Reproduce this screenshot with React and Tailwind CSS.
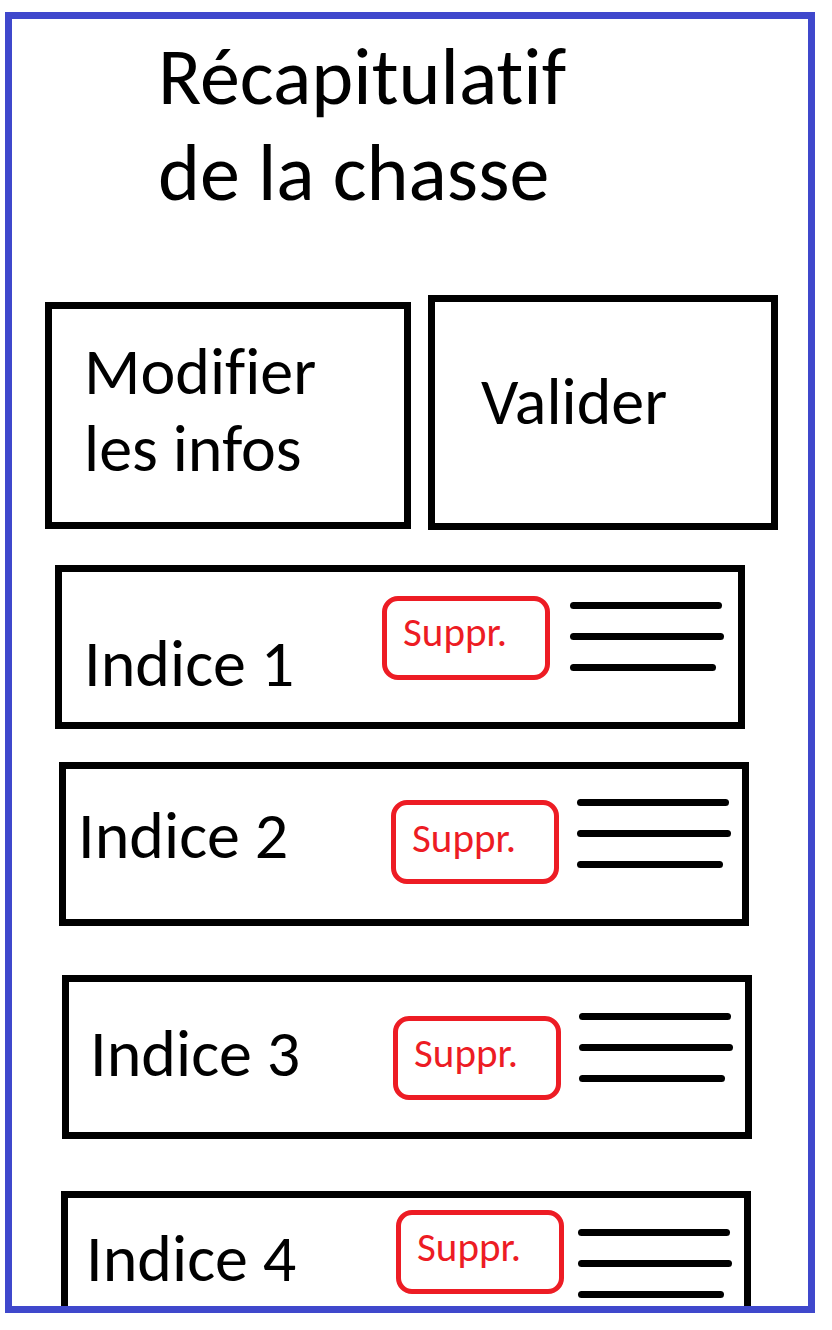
const rows = [
  {
    label: 'Indice 1',
    box: 'ml-[43px] mt-[35px]',
    text: 'ml-[22px] mt-[59px] w-[298px]',
    btn: 'mt-[24px] pt-[11px]',
    lines: 'ml-[20px] mt-[30px]',
  },
  {
    label: 'Indice 2',
    box: 'ml-[47px] mt-[33px]',
    text: 'ml-[12px] mt-[34px] w-[313px]',
    btn: 'mt-[31px] pt-[13px]',
    lines: 'ml-[18px] mt-[30px]',
  },
  {
    label: 'Indice 3',
    box: 'ml-[50px] mt-[49px]',
    text: 'ml-[21px] mt-[39px] w-[303px]',
    btn: 'mt-[34px] pt-[12px]',
    lines: 'ml-[18px] mt-[31px]',
  },
  {
    label: 'Indice 4',
    box: 'ml-[49px] mt-[52px]',
    text: 'ml-[18px] mt-[28px] w-[310px]',
    btn: 'mt-[12px] pt-[12px]',
    lines: 'ml-[14px] mt-[31px]',
  },
];

const ClueRow = ({ row }) => (
  <div className={`${row.box} w-[690px] h-[164px] shrink-0 border-[7px] border-black flex items-start`}>
    {/* Clue name */}
    <div className={`${row.text} text-[66px] leading-[66px] text-black whitespace-nowrap`}>
      {row.label}
    </div>

    {/* Delete button */}
    <button
      className={`${row.btn} w-[168px] h-[84px] shrink-0 border-[5px] border-[#ed1c24] rounded-[16px] pl-[16px] flex items-start text-left font-[inherit] text-[41px] leading-[40px] text-[#ed1c24]`}
    >
      Suppr.
    </button>

    {/* Drag handle */}
    <div className={`${row.lines} flex flex-col gap-[24px]`}>
      <span className="block w-[152px] h-[7px] rounded-full bg-black" />
      <span className="block w-[154px] h-[7px] rounded-full bg-black" />
      <span className="block w-[146px] h-[7px] rounded-full bg-black" />
    </div>
  </div>
);

const App = () => {
  return (
    <div className="w-[832px] h-[1330px] bg-white pt-[12px] pl-[5px] font-[Carlito,'Liberation_Sans_Narrow','Open_Sans',sans-serif] [font-variant-ligatures:none] [font-feature-settings:'liga'_0,'clig'_0]">
      <div className="w-[810px] h-[1301px] border-[7px] border-[#3f48cc] overflow-hidden flex flex-col">
        <h1 className="ml-[146px] mt-[10px] text-[80px] leading-[96px] font-normal text-black">
          Récapitulatif
          <br />
          de la chasse
        </h1>

        {/* Action buttons */}
        <div className="mt-[74px] ml-[33px] flex items-end gap-[17px]">
          <button className="w-[366px] h-[227px] mb-[1px] border-[7px] border-black pl-[32px] pt-[24px] text-left flex flex-col justify-start text-[66px] leading-[77px] text-black">
            <span>Modifier</span>
            <span>les infos</span>
          </button>
          <button className="w-[350px] h-[235px] border-[7px] border-black pl-[46px] pt-[61px] text-left flex flex-col justify-start text-[66px] leading-[77px] text-black">
            <span>Valider</span>
          </button>
        </div>

        {rows.map((row) => (
          <ClueRow key={row.label} row={row} />
        ))}
      </div>
    </div>
  );
};

export default App;
